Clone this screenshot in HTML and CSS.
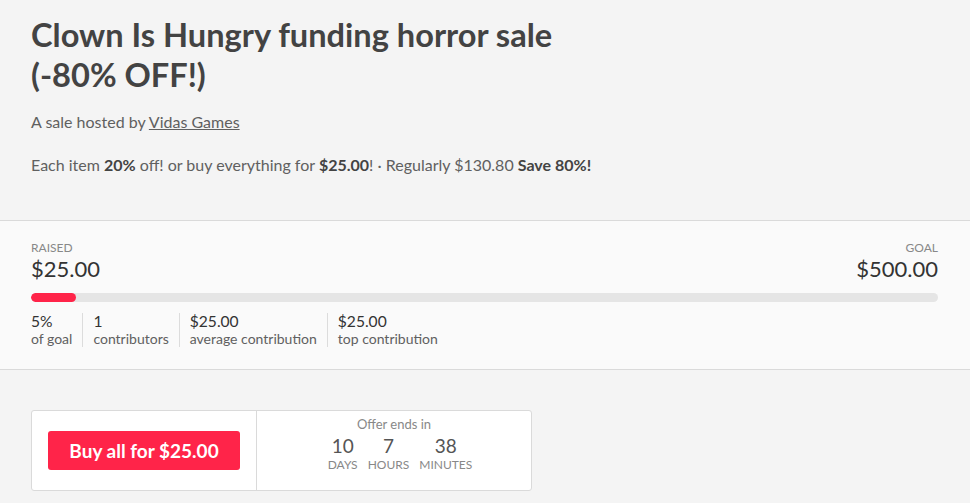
FILE: index.html
```html
<!DOCTYPE html>
<html>
<head>
<meta charset="utf-8">
<link rel="stylesheet" href="styles.css">
</head>
<body>
<header class="sale-header">
  <h1 class="sale-title">Clown Is Hungry funding horror sale<br>(-80% OFF!)</h1>
  <p class="hosted">A sale hosted by <a class="host-link" href="#">Vidas Games</a></p>
  <p class="deal">Each item <strong>20%</strong> off! or buy everything for <strong>$25.00</strong>! · Regularly $130.80 <strong>Save 80%!</strong></p>
</header>

<section class="funding">
  <div class="amounts">
    <div class="amount">
      <div class="amount-label">Raised</div>
      <div class="amount-value">$25.00</div>
    </div>
    <div class="amount amount-right">
      <div class="amount-label">Goal</div>
      <div class="amount-value">$500.00</div>
    </div>
  </div>
  <div class="bar"><div class="bar-fill" style="width: 5%"></div></div>
  <div class="stats">
    <div class="stat"><div class="stat-num">5%</div><div class="stat-sub">of goal</div></div>
    <div class="stat"><div class="stat-num">1</div><div class="stat-sub">contributors</div></div>
    <div class="stat"><div class="stat-num">$25.00</div><div class="stat-sub">average contribution</div></div>
    <div class="stat"><div class="stat-num">$25.00</div><div class="stat-sub">top contribution</div></div>
  </div>
</section>

<section class="buy-area">
  <div class="buy-box">
    <div class="buy-left">
      <a class="buy-btn" href="#">Buy all for $25.00</a>
    </div>
    <div class="buy-right">
      <div class="ends-label">Offer ends in</div>
      <div class="countdown">
        <div class="cd-item"><div class="cd-num">10</div><div class="cd-unit">Days</div></div>
        <div class="cd-item"><div class="cd-num">7</div><div class="cd-unit">Hours</div></div>
        <div class="cd-item"><div class="cd-num">38</div><div class="cd-unit">Minutes</div></div>
      </div>
    </div>
  </div>
</section>
</body>
</html>
```

FILE: styles.css
```css
* { box-sizing: border-box; }
html, body {
  margin: 0;
  padding: 0;
  background: #f4f4f4;
  font-family: Lato, "Open Sans", sans-serif;
  color: #434343;
}

.sale-header {
  padding: 15px 31px 43px;
}
.sale-title {
  margin: 0;
  font-size: 32.6px;
  line-height: 40px;
  font-weight: 700;
  color: #434343;
}
.hosted {
  margin: 15px 0 0;
  font-size: 16px;
  line-height: 24px;
  color: #606060;
}
.host-link {
  color: #606060;
  text-decoration: underline;
}
.deal {
  margin: 19px 0 0;
  font-size: 16px;
  line-height: 24px;
  color: #606060;
}
.deal strong {
  color: #434343;
  font-weight: 700;
}

.funding {
  background: #fafafa;
  border-top: 1px solid #dadada;
  border-bottom: 1px solid #dadada;
  padding: 19px 32px 22px 31px;
}
.amounts {
  display: flex;
  justify-content: space-between;
}
.amount-right { text-align: right; }
.amount-label {
  font-size: 12px;
  line-height: 16px;
  text-transform: uppercase;
  color: #888;
}
.amount-value {
  font-size: 22px;
  line-height: 26px;
  color: #333;
}
.bar {
  margin-top: 11px;
  height: 9px;
  border-radius: 5px;
  background: #e5e5e5;
  overflow: hidden;
}
.bar-fill {
  height: 100%;
  border-radius: 5px;
  background: #ff2449;
}
.stats {
  display: flex;
  margin-top: 11px;
}
.stat {
  padding: 0 10px;
  border-left: 1px solid #dcdcdc;
}
.stat:first-child {
  padding-left: 0;
  border-left: 0;
}
.stat-num {
  font-size: 15.6px;
  line-height: 17px;
  color: #333;
}
.stat-sub {
  font-size: 14px;
  line-height: 17px;
  color: #606060;
}

.buy-area {
  padding: 40px 31px 20px;
}
.buy-box {
  display: flex;
  width: 501px;
  background: #fff;
  border: 1px solid #dadada;
  border-radius: 3px;
}
.buy-left {
  padding: 20px 16px 20px 16px;
  border-right: 1px solid #dadada;
}
.buy-btn {
  display: block;
  width: 192px;
  height: 39px;
  line-height: 39px;
  text-align: center;
  background: #ff2449;
  color: #fff;
  font-weight: 700;
  font-size: 19px;
  border-radius: 3px;
  text-decoration: none;
}
.buy-right {
  flex: 1;
  display: flex;
  flex-direction: column;
  align-items: center;
  padding-top: 5px;
}
.ends-label {
  font-size: 13px;
  line-height: 16px;
  color: #888;
}
.countdown {
  display: flex;
  gap: 10px;
  margin-top: 3px;
  margin-left: 12px;
}
.cd-item { text-align: center; }
.cd-num {
  font-size: 19px;
  line-height: 22px;
  color: #555;
}
.cd-unit {
  margin-top: 1px;
  font-size: 12px;
  line-height: 14px;
  text-transform: uppercase;
  color: #888;
}
```
